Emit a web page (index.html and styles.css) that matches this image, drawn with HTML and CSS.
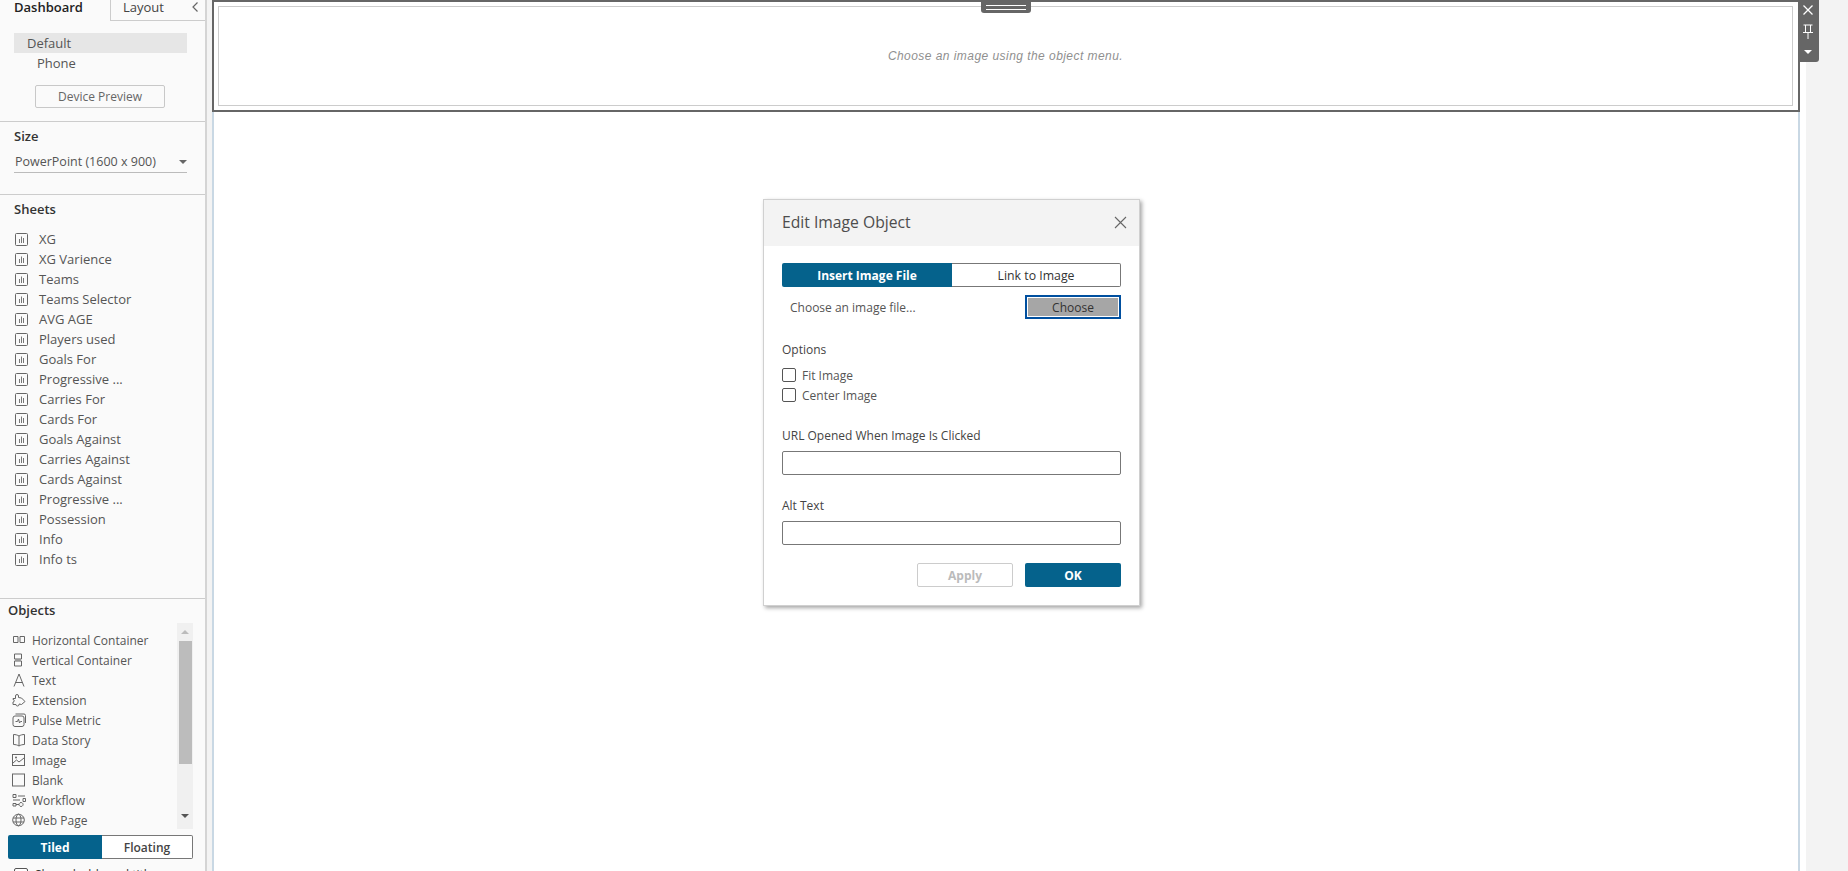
FILE: index.html
```html
<!DOCTYPE html>
<html lang="en">
<head>
<meta charset="utf-8">
<title>Edit Image Object</title>
<link rel="stylesheet" href="styles.css">
</head>
<body>
<svg class="defs" width="0" height="0" aria-hidden="true">
  <symbol id="sheet" viewBox="0 0 13 13">
    <rect x=".5" y=".5" width="12" height="12" rx="1" fill="none" stroke="#666"/>
    <path d="M4.500 6v4M6.500 3.500V10M8.500 5v5" stroke="#777" fill="none"/>
  </symbol>
</svg>
<div class="app">
  <aside class="sidebar">
    <section class="sec sec-top">
      <div class="tabs">
        <div class="tab tab-active">Dashboard</div>
        <div class="tab tab-layout">Layout</div>
        <div class="tab-collapse">
          <svg width="8" height="12" viewBox="0 0 8 12"><path d="M6.500 1.500 2 6l4.500 4.500" fill="none" stroke="#666" stroke-width="1.200"/></svg>
        </div>
      </div>
      <div class="device device-on">Default</div>
      <div class="device device-phone">Phone</div>
      <button class="preview">Device Preview</button>
    </section>
    <section class="sec sec-size">
      <h3 class="sec-title">Size</h3>
      <div class="select"><span>PowerPoint (1600 x 900)</span><i class="caret"></i></div>
    </section>
    <section class="sec sec-sheets">
      <h3 class="sec-title">Sheets</h3>
      <ul class="sheets">
        <li><svg class="si"><use href="#sheet"/></svg>XG</li>
        <li><svg class="si"><use href="#sheet"/></svg>XG Varience</li>
        <li><svg class="si"><use href="#sheet"/></svg>Teams</li>
        <li><svg class="si"><use href="#sheet"/></svg>Teams Selector</li>
        <li><svg class="si"><use href="#sheet"/></svg>AVG AGE</li>
        <li><svg class="si"><use href="#sheet"/></svg>Players used</li>
        <li><svg class="si"><use href="#sheet"/></svg>Goals For</li>
        <li><svg class="si"><use href="#sheet"/></svg>Progressive ...</li>
        <li><svg class="si"><use href="#sheet"/></svg>Carries For</li>
        <li><svg class="si"><use href="#sheet"/></svg>Cards For</li>
        <li><svg class="si"><use href="#sheet"/></svg>Goals Against</li>
        <li><svg class="si"><use href="#sheet"/></svg>Carries Against</li>
        <li><svg class="si"><use href="#sheet"/></svg>Cards Against</li>
        <li><svg class="si"><use href="#sheet"/></svg>Progressive ...</li>
        <li><svg class="si"><use href="#sheet"/></svg>Possession</li>
        <li><svg class="si"><use href="#sheet"/></svg>Info</li>
        <li><svg class="si"><use href="#sheet"/></svg>Info ts</li>
      </ul>
    </section>
    <section class="sec-objects">
      <h3 class="obj-title">Objects</h3>
      <div class="obj-wrap">
        <ul class="objects">
          <li><svg class="oi" viewBox="0 0 14 14"><path d="M1.500 3.500h4.500v6H1.500zM8 3.500h4.500v6H8z" fill="none" stroke="#666"/></svg>Horizontal Container</li>
          <li><svg class="oi" viewBox="0 0 14 14"><path d="M2.500 1h7v5h-7zM2.500 8h7v5h-7z" fill="none" stroke="#666"/><path d="M3 6h6v2H3z" fill="#999"/></svg>Vertical Container</li>
          <li><svg class="oi" viewBox="0 0 14 14"><path d="M2 13.500 7 1l5 12.500M3.500 9.500h7" fill="none" stroke="#666"/></svg>Text</li>
          <li><svg class="oi" viewBox="0 0 14 14"><path d="M1 5.500h2.500V3a1.500 1.500 0 0 1 3 0v1.500l3 .5 3.500 3.500-3.500 3-2.500-.5v.5a1.500 1.500 0 0 1-3 0h-3v-2.500a1.200 1.200 0 0 0 0-2.500z" fill="none" stroke="#666"/></svg>Extension</li>
          <li><svg class="oi" viewBox="0 0 14 14"><rect x="1" y="3" width="11" height="10.500" rx="2" fill="none" stroke="#666"/><path d="M3.500 1h8.500a1.500 1.500 0 0 1 1.500 1.500V10M3.500 8.500h2l1-2.500 1 4 1-1.500h1.500" fill="none" stroke="#666"/></svg>Pulse Metric</li>
          <li><svg class="oi" viewBox="0 0 14 14"><path d="M7 3C5.500 2 3.500 1.500 1.500 1.500v10c2 0 4 .5 5.500 1.500 1.500-1 3.500-1.500 5.500-1.500v-10C10.500 1.500 8.500 2 7 3zM7 3v10" fill="none" stroke="#666"/></svg>Data Story</li>
          <li><svg class="oi" viewBox="0 0 14 14"><rect x=".5" y="1.500" width="12" height="11" fill="none" stroke="#666"/><path d="m1 10 3.500-3 2.500 2 5-4" fill="none" stroke="#666"/><circle cx="4" cy="4.500" r="1" fill="#666"/></svg>Image</li>
          <li><svg class="oi" viewBox="0 0 14 14"><rect x=".5" y="1" width="12" height="12" fill="none" stroke="#666"/></svg>Blank</li>
          <li><svg class="oi" viewBox="0 0 14 14"><path d="M1 1.500h3v3H1zM6 3h7M1 7h7M11 5.500h2.500v3H11zM1 10.500h3v2.500H1zM4 11.500h3M9 9.500a2 2 0 1 0 .1 0" fill="none" stroke="#666"/></svg>Workflow</li>
          <li><svg class="oi" viewBox="0 0 14 14"><circle cx="6.500" cy="7" r="5.800" fill="none" stroke="#666"/><ellipse cx="6.500" cy="7" rx="2.500" ry="5.800" fill="none" stroke="#666"/><path d="M1 5h11M1 9h11" stroke="#666"/></svg>Web Page</li>
        </ul>
        <div class="scroll">
          <i class="arrow-up"></i>
          <div class="thumb"></div>
          <i class="arrow-down"></i>
        </div>
      </div>
      <div class="toggle">
        <div class="tog tog-on">Tiled</div>
        <div class="tog tog-off">Floating</div>
      </div>
      <label class="show-title"><span class="box"></span>Show dashboard title</label>
    </section>
  </aside>

  <main class="workspace">
    <div class="canvas">
      <div class="frame">
        <div class="frame-inner">Choose an image using the object menu.</div>
        <div class="handle"><span></span><span></span></div>
        <div class="tools">
          <svg width="12" height="12" viewBox="0 0 12 12"><path d="M1.500 1.500l9 9M10.500 1.500l-9 9" stroke="#fff" stroke-width="1.300" fill="none"/></svg>
          <svg width="12" height="15" viewBox="0 0 12 15"><path d="M1.500 1h9M3.500 1v7M8.500 1v7M1 8.500h10M6 9v6" stroke="#fff" fill="none"/></svg>
          <i class="tool-caret"></i>
        </div>
      </div>
    </div>

    <div class="dialog">
      <header class="dlg-head">
        <h2>Edit Image Object</h2>
        <svg width="13" height="13" viewBox="0 0 13 13"><path d="M1 1l11 11M12 1 1 12" stroke="#666" stroke-width="1.100" fill="none"/></svg>
      </header>
      <div class="dlg-body">
        <div class="seg">
          <div class="seg-on">Insert Image File</div>
          <div class="seg-off">Link to Image</div>
        </div>
        <div class="choose-row">
          <span>Choose an image file...</span>
          <button class="choose">Choose</button>
        </div>
        <div class="label lab-options">Options</div>
        <label class="check"><span class="box"></span>Fit Image</label>
        <label class="check"><span class="box"></span>Center Image</label>
        <div class="label lab-url">URL Opened When Image Is Clicked</div>
        <div class="input"></div>
        <div class="label lab-alt">Alt Text</div>
        <div class="input"></div>
        <div class="actions">
          <button class="btn-apply">Apply</button>
          <button class="btn-ok">OK</button>
        </div>
      </div>
    </div>
  </main>
</div>
</body>
</html>
```

FILE: styles.css
```css
* { box-sizing: border-box; }
html, body { margin: 0; height: 100%; overflow: hidden; }
body {
  background: #f3f3f3;
  color: #4a4a4a;
  font-family: "Open Sans", "Noto Sans", sans-serif;
  font-size: 12px;
}
.defs { position: absolute; }
ul { list-style: none; margin: 0; padding: 0; }
h2, h3 { margin: 0; font-weight: 400; }
button { font-family: inherit; padding: 0; }

.app { display: flex; height: 871px; }

/* Sidebar */
.sidebar {
  width: 207px;
  flex: none;
  height: 871px;
  overflow: hidden;
  background: #fafafa;
  border-right: 2px solid #d4d4d4;
  display: flex;
  flex-direction: column;
}
.sec { border-bottom: 1px solid #ccc; flex: none; }
.sec-top { height: 122px; }
.sec-size { height: 73px; padding: 6px 18px 0 14px; }
.sec-sheets { height: 404px; padding: 6px 14px 0; }
.sec-title { font-size: 13px; font-weight: 600; color: #333; line-height: 17px; }

.tabs { display: flex; height: 21px; position: relative; }
.tab { line-height: 15px; font-size: 13px; }
.tab-active { width: 110px; padding-left: 14px; font-weight: 600; color: #222; }
.tab-layout {
  width: 95px;
  padding-left: 12px;
  border-left: 1px solid #ccc;
  border-bottom: 1px solid #ccc;
  color: #444;
}
.tab-collapse { position: absolute; left: 191px; top: 1px; line-height: 0; }

.device { height: 20px; line-height: 20px; font-size: 13px; color: #555; }
.device-on { margin: 12px 18px 0 14px; background: #e6e6e6; padding-left: 13px; }
.device-phone { padding-left: 37px; }
.preview {
  display: block;
  width: 130px;
  height: 23px;
  margin: 12px 0 0 35px;
  background: #fafafa;
  border: 1px solid #c8c8c8;
  border-radius: 2px;
  font-size: 12px;
  color: #666;
}

.select {
  margin-top: 6px;
  height: 22px;
  display: flex;
  justify-content: space-between;
  align-items: center;
  border-bottom: 1px solid #bbb;
  padding-left: 1px;
  font-size: 12.500px;
  color: #555;
}
.caret {
  border: 4px solid transparent;
  border-top: 4px solid #666;
  border-bottom: 0;
}

.sheets { margin-top: 11px; }
.sheets li {
  height: 20px;
  display: flex;
  align-items: center;
  font-size: 13px;
  color: #555;
}
.si { width: 13px; height: 13px; margin: 0 11px 0 1px; flex: none; }

/* Objects */
.sec-objects { flex: 1; padding: 0 12px 0 8px; position: relative; }
.obj-title { font-size: 13px; font-weight: 600; color: #333; line-height: 17px; margin: 3px 0 0 0; }
.obj-wrap { display: flex; height: 206px; margin-top: 4px; }
.objects { flex: 1; padding-top: 7px; }
.objects li {
  height: 20px;
  display: flex;
  align-items: center;
  font-size: 12px;
  color: #555;
}
.oi { width: 14px; height: 14px; margin: 0 6px 0 4px; flex: none; }
.scroll {
  width: 16px;
  background: #f0f0f0;
  margin-left: auto;
  display: flex;
  flex-direction: column;
  align-items: center;
}
.thumb { width: 13px; height: 123px; background: #bcbcbc; margin-top: 7px; }
.arrow-up, .arrow-down { width: 0; height: 0; border: 4px solid transparent; }
.arrow-up { border-top: 0; border-bottom: 4px solid #bbb; margin-top: 7px; }
.arrow-down { border-bottom: 0; border-top: 4px solid #555; margin-top: 50px; }

.toggle { display: flex; height: 24px; margin-top: 6px; width: 185px; }
.tog { display: flex; align-items: center; justify-content: center; font-size: 12px; font-weight: 600; }
.tog-on { width: 94px; background: #05628c; color: #fff; border-radius: 2px 0 0 2px; font-weight: 700; }
.tog-off { flex: 1; border: 1px solid #777; border-left: 0; border-radius: 0 2px 2px 0; color: #444; background: #fff; }
.show-title { display: flex; align-items: center; gap: 7px; margin: 7px 0 0 6px; font-size: 12px; color: #333; }

.box { width: 14px; height: 14px; border: 1px solid #555; border-radius: 2px; background: #fff; flex: none; }

/* Workspace */
.workspace { flex: 1; position: relative; padding-left: 5px; min-width: 0; }
.canvas {
  width: 1588px;
  height: 871px;
  background: #fff;
  border-left: 2px solid #c9d8e4;
  border-right: 2px solid #c9d8e4;
  box-shadow: 6px 0 0 #fff;
}
.frame {
  position: relative;
  margin: 0 -2px;
  height: 112px;
  background: #fff;
  border: 2px solid #666;
  padding: 4px 5px 4px 4px;
}
.frame-inner {
  height: 100%;
  border: 1px solid #ccc;
  display: flex;
  align-items: center;
  justify-content: center;
  font-family: "Liberation Sans", Arial, sans-serif;
  font-style: italic;
  font-size: 12px;
  letter-spacing: .45px;
  color: #8f8f8f;
}
.handle {
  position: absolute;
  left: 767px;
  top: -2px;
  width: 50px;
  height: 13px;
  background: #666;
  border-radius: 0 0 3px 3px;
  display: flex;
  flex-direction: column;
  align-items: center;
  gap: 3px;
  padding-top: 5px;
}
.handle span { width: 40px; height: 1px; background: #fff; }
.tools {
  position: absolute;
  left: 1585px;
  top: -2px;
  width: 20px;
  height: 62px;
  background: #666;
  border-radius: 0 0 3px 0;
  display: flex;
  flex-direction: column;
  align-items: center;
  padding: 4px 3px 0 0;
}
.tools svg { flex: none; }
.tools svg + svg { margin-top: 8px; }
.tool-caret {
  margin-top: 11px;
  border: 4px solid transparent;
  border-top: 4px solid #fff;
  border-bottom: 0;
}

/* Dialog */
.dialog {
  position: absolute;
  left: 556px;
  top: 199px;
  width: 377px;
  height: 407px;
  background: #fff;
  border: 1px solid #d0d0d0;
  box-shadow: 2px 2px 4px rgba(0, 0, 0, .35);
}
.dlg-head {
  height: 46px;
  background: #f3f3f3;
  display: flex;
  align-items: center;
  justify-content: space-between;
  padding: 0 12px 2px 18px;
}
.dlg-head h2 { font-size: 15.700px; color: #4d4d4d; }
.dlg-body { padding: 17px 18px 0 18px; }
.seg { display: flex; height: 24px; }
.seg-on, .seg-off { display: flex; align-items: center; justify-content: center; font-size: 12px; }
.seg-on { width: 170px; background: #05628c; color: #fff; font-weight: 700; border-radius: 2px 0 0 2px; }
.seg-off { flex: 1; border: 1px solid #777; border-left: 0; border-radius: 0 2px 2px 0; color: #333; font-size: 12.300px; }
.choose-row {
  display: flex;
  justify-content: space-between;
  align-items: center;
  height: 24px;
  margin-top: 8px;
  padding-left: 8px;
  font-size: 12px;
  color: #555;
}
.choose {
  width: 96px;
  height: 24px;
  background: #a6a6a6;
  border: 2px solid #004f9f;
  box-shadow: inset 0 0 0 1px #fff;
  color: #333;
  font-size: 12px;
  font-weight: 500;
}
.label { font-size: 12px; color: #444; line-height: 16px; }
.lab-options { margin-top: 23px; }
.lab-url { margin-top: 23px; }
.lab-alt { margin-top: 23px; }
.check { display: flex; align-items: center; gap: 6px; height: 20px; font-size: 12px; color: #555; }
.lab-options + .check { margin-top: 7px; }
.input { height: 24px; border: 1px solid #777; border-radius: 2px; margin-top: 7px; }
.actions { display: flex; justify-content: flex-end; gap: 12px; margin-top: 18px; }
.btn-apply, .btn-ok { width: 96px; height: 24px; border-radius: 2px; font-size: 12px; font-weight: 700; }
.btn-apply { background: #fff; border: 1px solid #ccc; color: #bbb; }
.btn-ok { background: #05628c; border: 0; color: #fff; }
```
